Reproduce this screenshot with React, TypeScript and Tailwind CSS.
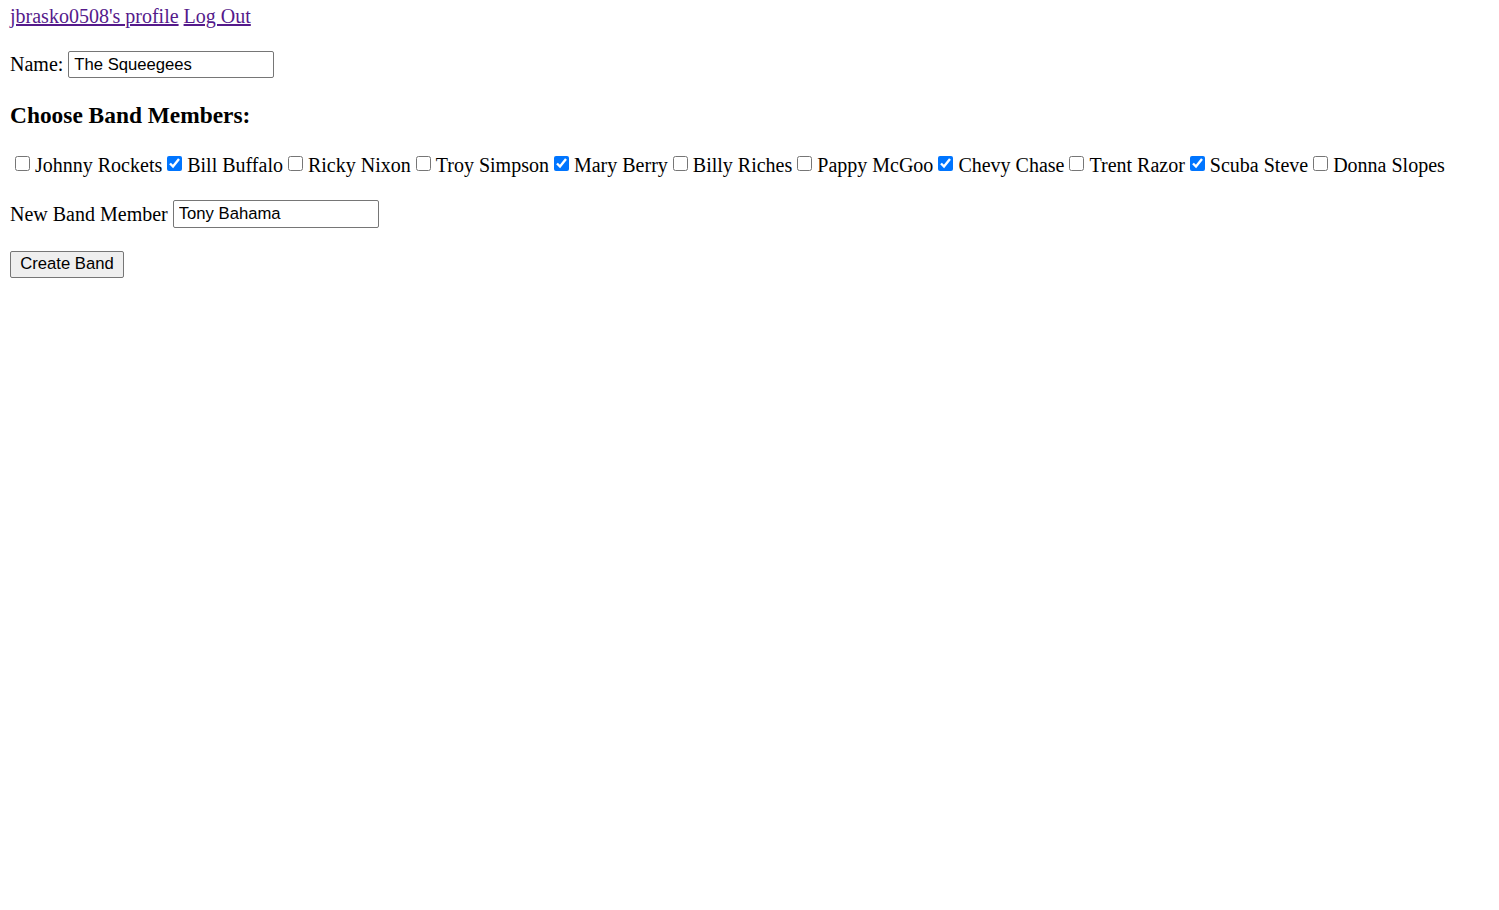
import React from 'react';

const members = [
  { name: 'Johnny Rockets', on: false },
  { name: 'Bill Buffalo', on: true },
  { name: 'Ricky Nixon', on: false },
  { name: 'Troy Simpson', on: false },
  { name: 'Mary Berry', on: true },
  { name: 'Billy Riches', on: false },
  { name: 'Pappy McGoo', on: false },
  { name: 'Chevy Chase', on: true },
  { name: 'Trent Razor', on: false },
  { name: 'Scuba Steve', on: true },
  { name: 'Donna Slopes', on: false },
];

export default function App() {
  return (
    <div
      className="min-h-screen bg-white px-[10px] pt-[5px] text-[20px] leading-[23px] text-black"
      style={{ fontFamily: "'Liberation Serif', 'Times New Roman', serif" }}
    >
      {/* Header links */}
      <div>
        <a href="#" className="text-[#551a8b] underline">jbrasko0508's profile</a>{' '}
        <a href="#" className="text-[#551a8b] underline">Log Out</a>
      </div>

      <form onSubmit={(e) => e.preventDefault()}>
        <p className="mt-[23px] flex items-center gap-[5px]">
          <span>Name:</span>
          <input
            type="text"
            defaultValue="The Squeegees"
            className="h-[27px] w-[206px] rounded-[2px] border border-[#767676] px-[5px] text-[16.67px] text-black outline-none"
            style={{ fontFamily: "'Liberation Sans', Arial, sans-serif" }}
          />
        </p>

        <h3 className="mt-[24px] text-[23.4px] font-bold leading-[27px]">Choose Band Members:</h3>

        <p className="mt-[25px] flex items-center">
          {members.map((m) => (
            <label key={m.name} className="flex items-center">
              <input
                type="checkbox"
                defaultChecked={m.on}
                className="relative -top-[2px] ml-[5px] mr-[5px] h-[15px] w-[15px] accent-[#0075ff]"
              />
              <span>{m.name}</span>
            </label>
          ))}
        </p>

        <p className="mt-[23px] flex items-center gap-[5px]">
          <span>New Band Member</span>
          <input
            type="text"
            defaultValue="Tony Bahama"
            className="h-[28px] w-[206px] rounded-[2px] border border-[#767676] px-[5px] text-[16.67px] text-black outline-none"
            style={{ fontFamily: "'Liberation Sans', Arial, sans-serif" }}
          />
        </p>

        <p className="mt-[23px]">
          <button
            type="submit"
            className="h-[27px] w-[114px] rounded-[2px] border border-[#767676] bg-[#efefef] text-[16.67px] leading-none text-black"
            style={{ fontFamily: "'Liberation Sans', Arial, sans-serif" }}
          >
            Create Band
          </button>
        </p>
      </form>
    </div>
  );
}
